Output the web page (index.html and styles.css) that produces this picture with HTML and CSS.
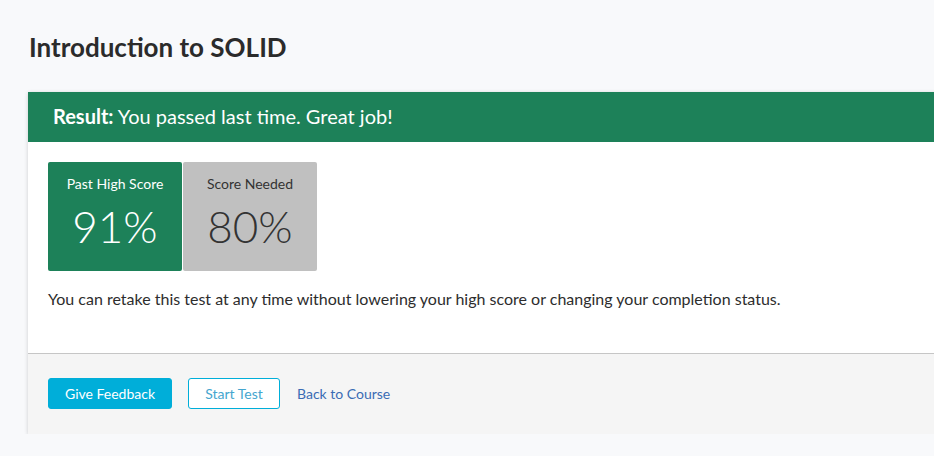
FILE: index.html
```html
<!DOCTYPE html>
<html>
<head>
<meta charset="utf-8">
<link rel="stylesheet" href="styles.css">
</head>
<body>
<main class="page">
  <h1 class="title">Introduction to SOLID</h1>
  <section class="card">
    <div class="result">
      <strong>Result:</strong> You passed last time. Great job!
    </div>
    <div class="body">
      <div class="scores">
        <div class="score score-pass">
          <div class="score-label">Past High Score</div>
          <div class="score-value">91%</div>
        </div>
        <div class="score score-needed">
          <div class="score-label">Score Needed</div>
          <div class="score-value">80%</div>
        </div>
      </div>
      <p class="note">You can retake this test at any time without lowering your high score or changing your completion status.</p>
    </div>
    <div class="footer">
      <button class="btn btn-primary">Give Feedback</button>
      <button class="btn btn-outline">Start Test</button>
      <a class="link" href="#">Back to Course</a>
    </div>
  </section>
</main>
</body>
</html>
```
FILE: styles.css
```css
html, body {
  margin: 0;
  padding: 0;
  background: #f8f9fb;
  font-family: Lato, "Open Sans", sans-serif;
  color: #2d2d2d;
  overflow: hidden;
}
.page {
  padding: 30px 0 0 28px;
}
.title {
  margin: 0 0 0 1px;
  font-size: 26px;
  font-weight: 700;
  line-height: 34px;
  color: #2b2b2b;
}
.card {
  margin-top: 28px;
  width: 960px;
  background: #fff;
  box-shadow: 0 1px 4px rgba(0,0,0,0.18);
}
.result {
  background: #1d8159;
  color: #fff;
  height: 50px;
  line-height: 48px;
  padding-left: 25px;
  font-size: 20px;
}
.result strong { font-weight: 700; }
.body {
  padding: 20px 20px 0 20px;
  height: 212px;
  box-sizing: border-box;
  border-bottom: 1px solid #c6c6c6;
}
.scores {
  display: flex;
  gap: 1px;
}
.score {
  width: 134px;
  height: 109px;
  border-radius: 2px;
  text-align: center;
  box-sizing: border-box;
  padding-top: 14px;
}
.score-pass { background: #1d8159; color: #fff; }
.score-needed { background: #c0c0c0; color: #333; }
.score-label {
  font-size: 14px;
  line-height: 16px;
}
.score-value {
  font-size: 44px;
  font-weight: 300;
  line-height: 50px;
  margin-top: 9px;
}
.note {
  margin: 18px 0 0 0;
  font-size: 16px;
  line-height: 20px;
  color: #2d2d2d;
}
.footer {
  background: #f5f5f5;
  height: 80px;
  display: flex;
  align-items: center;
  padding-left: 20px;
}
.btn {
  font-family: Lato, "Open Sans", sans-serif;
  font-size: 14px;
  height: 31px;
  margin-top: -1px;
  border-radius: 3px;
  cursor: pointer;
  box-sizing: border-box;
  padding: 0;
}
.btn-primary {
  background: #00aed9;
  color: #fff;
  border: 1px solid #00aed9;
  width: 124px;
}
.btn-outline {
  margin-left: 16px;
  background: #fff;
  color: #45a6cf;
  border: 1px solid #00aed9;
  width: 92px;
}
.link {
  margin-left: 17px;
  margin-top: -1px;
  font-size: 14px;
  color: #3a6cb4;
  text-decoration: none;
}
```
